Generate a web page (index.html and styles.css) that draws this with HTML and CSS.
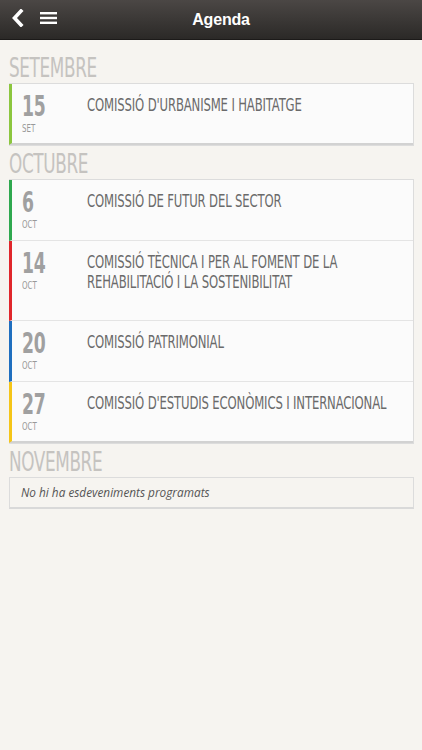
FILE: index.html
```html
<!DOCTYPE html>
<html lang="ca">
<head>
    <meta charset="UTF-8">
    <meta name="viewport" content="width=device-width, initial-scale=1.0">
    <title>Agenda</title>
    <link rel="stylesheet" href="styles.css">
</head>
<body>
    <div class="topbar">
        <div class="topbar-icons">
            <svg class="icon" width="14" height="18" viewBox="0 0 14 18"><path d="M10 2 L3.5 9 L10 16" fill="none" stroke="#fff" stroke-width="3.6" stroke-linecap="square"/></svg>
            <svg class="icon" width="17" height="14" viewBox="0 0 17 14"><rect x="0" y="1" width="17" height="2.4" fill="#fff"/><rect x="0" y="5.8" width="17" height="2.4" fill="#fff"/><rect x="0" y="10.6" width="17" height="2.4" fill="#fff"/></svg>
        </div>
        <h1 class="title">Agenda</h1>
    </div>

    <div class="content">
        <h2 class="month"><span>SETEMBRE</span></h2>
        <div class="list">
            <div class="event lime">
                <div class="date"><span class="day">15</span><span class="mon">SET</span></div>
                <div class="name"><span>COMISSIÓ D'URBANISME I HABITATGE</span></div>
            </div>
        </div>

        <h2 class="month"><span>OCTUBRE</span></h2>
        <div class="list">
            <div class="event green">
                <div class="date"><span class="day">6</span><span class="mon">OCT</span></div>
                <div class="name"><span>COMISSIÓ DE FUTUR DEL SECTOR</span></div>
            </div>
            <div class="event red tall">
                <div class="date"><span class="day">14</span><span class="mon">OCT</span></div>
                <div class="name"><span>COMISSIÓ TÈCNICA I PER AL FOMENT DE LA REHABILITACIÓ I LA SOSTENIBILITAT</span></div>
            </div>
            <div class="event blue">
                <div class="date"><span class="day">20</span><span class="mon">OCT</span></div>
                <div class="name"><span>COMISSIÓ PATRIMONIAL</span></div>
            </div>
            <div class="event yellow">
                <div class="date"><span class="day">27</span><span class="mon">OCT</span></div>
                <div class="name"><span>COMISSIÓ D'ESTUDIS ECONÒMICS I INTERNACIONAL</span></div>
            </div>
        </div>

        <h2 class="month"><span>NOVEMBRE</span></h2>
        <div class="empty">No hi ha esdeveniments programats</div>
    </div>
</body>
</html>
```

FILE: styles.css
```css
body {
    margin: 0;
    padding: 0;
    background: #f6f4f0;
    font-family: "DejaVu Sans Condensed", "Liberation Sans", sans-serif;
    color: #666;
}

.topbar {
    position: relative;
    height: 39px;
    padding-left: 20px;
    background: linear-gradient(#4b4745, #2b2927);
    border-bottom: 1px solid #1c1a19;
    display: flex;
    align-items: center;
    justify-content: center;
}

.topbar-icons {
    position: absolute;
    left: 11px;
    top: 9px;
    display: flex;
    align-items: center;
    gap: 15px;
}

.icon {
    display: block;
}

.title {
    margin: 0;
    font-family: "Liberation Sans", Arial, sans-serif;
    font-size: 16px;
    font-weight: bold;
    color: #fff;
    letter-spacing: -0.2px;
}

.content {
    padding: 16px 8px 0 9px;
}

/* condensed look: the text is squeezed horizontally */
.month {
    margin: 0 0 3px 0;
    font-size: 26px;
    font-weight: normal;
    line-height: 24px;
    color: #c5c3c0;
    letter-spacing: -0.5px;
}

.month span {
    display: inline-block;
    transform: scaleX(0.72);
    transform-origin: left;
}

.list {
    background: #fbfbfb;
    border: 1px solid #dcdcdc;
    border-left: none;
    margin-bottom: 6px;
}

.event {
    display: flex;
    height: 60px;
    border-left: 3px solid #8cc63f;
    border-bottom: 1px solid #e4e4e4;
}

.event:last-child {
    height: 59px;
    border-bottom: 2px solid #d2d2d2;
}

.event.tall {
    height: 79px;
}

.event.green { border-left-color: #2fa84f; }
.event.red { border-left-color: #e0262b; }
.event.blue { border-left-color: #1f6fbf; }
.event.yellow { border-left-color: #f5c518; }

.date {
    width: 75px;
    padding: 5px 0 0 10px;
    box-sizing: border-box;
    flex-shrink: 0;
    display: flex;
    flex-direction: column;
    align-items: flex-start;
}

.day {
    display: block;
    font-size: 29px;
    font-weight: bold;
    line-height: 34px;
    color: #a0a0a0;
    letter-spacing: -0.5px;
    transform: scaleX(0.66);
    transform-origin: left;
}

.mon {
    display: block;
    font-size: 10px;
    line-height: 12px;
    color: #999;
    transform: scaleX(0.78);
    transform-origin: left;
}

.name {
    flex: 1;
    min-width: 0;
    overflow: hidden;
    padding: 11px 8px 0 0;
}

.name span {
    display: block;
    width: calc(100% / 0.72);
    font-size: 18px;
    line-height: 20px;
    color: #6a6a6a;
    letter-spacing: -0.2px;
    transform: scaleX(0.72);
    transform-origin: left;
}

.empty {
    border: 1px solid #dcdcdc;
    border-bottom: 2px solid #d9d9d9;
    padding: 7px 11px 7px;
    font-family: "Open Sans", sans-serif;
    font-style: italic;
    font-size: 11.8px;
    line-height: 15px;
    color: #555;
}
```
